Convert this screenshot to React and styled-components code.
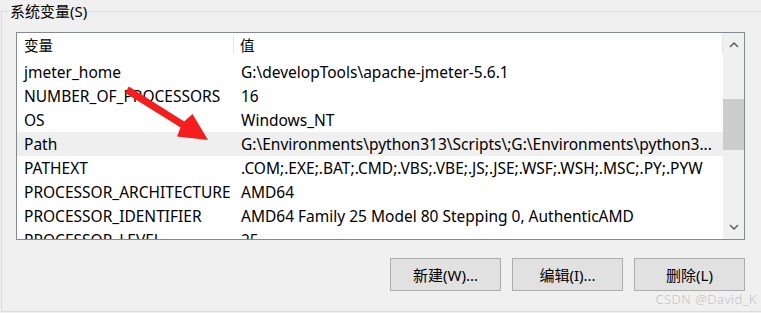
import React from "react";
import styled, { createGlobalStyle } from "styled-components";

const Global = createGlobalStyle`
  html, body { margin: 0; padding: 0; background: #f0f0f0; }
  body { font-family: "Noto Sans", "Noto Sans CJK SC", sans-serif; color: #000; }
`;

const Page = styled.div`
  position: relative;
  width: 761px;
  height: 313px;
  overflow: hidden;
  background: #f0f0f0;
  padding-top: 11px;
  box-sizing: border-box;
`;

const GroupBox = styled.div`
  margin-left: 1px;
  height: 301px;
  border: 1px solid #dcdcdc;
  border-right: none;
  box-sizing: border-box;
`;

const GroupTitle = styled.div`
  width: fit-content;
  height: 20px;
  margin: -11px 0 0 7px;
  padding: 0 1px;
  background: #f0f0f0;
  font-size: 15px;
  line-height: 20px;
`;

const ListBox = styled.div`
  display: flex;
  margin: 11px 0 0 14px;
  width: 729px;
  height: 208px;
  border: 1px solid #858a91;
  box-sizing: border-box;
  background: #fff;
  overflow: hidden;
`;

const ListArea = styled.div`
  flex: 1;
  display: flex;
  flex-direction: column;
  overflow: hidden;
`;

const HeaderRow = styled.div`
  display: flex;
  height: 27px;
  flex: none;
  align-items: stretch;
  font-size: 14.5px;
`;

const Row = styled.div`
  display: flex;
  height: 24px;
  flex: none;
  align-items: center;
  font-size: 15.5px;
  line-height: 20px;
  background: ${(p) => (p.$hot ? "#efefef" : "#fff")};
`;

const NameCell = styled.div`
  width: 217px;
  flex: none;
  padding-left: 7px;
  box-sizing: border-box;
  white-space: nowrap;
  overflow: hidden;
`;

const ValueCell = styled.div`
  flex: 1;
  padding-left: 7px;
  white-space: nowrap;
  overflow: hidden;
`;

const HeaderCell = styled.div`
  display: flex;
  align-items: center;
  box-sizing: border-box;
  padding-left: ${(p) => p.$pad}px;
  width: ${(p) => (p.$w ? `${p.$w}px` : "auto")};
  flex: ${(p) => (p.$w ? "none" : "1")};
  border-right: 1px solid #e5e5e5;
  margin: 1px 0 6px;
`;

const ScrollBar = styled.div`
  width: 21px;
  flex: none;
  display: flex;
  flex-direction: column;
  background: #f0f0f0;
`;

const ScrollButton = styled.div`
  height: 24px;
  flex: none;
  display: flex;
  align-items: center;
  justify-content: center;
`;

const Track = styled.div`
  flex: 1;
`;

const Thumb = styled.div`
  margin-top: 42px;
  height: 51px;
  background: #cdcdcd;
`;

const ButtonRow = styled.div`
  display: flex;
  justify-content: flex-end;
  gap: 11px;
  margin: 18px 16px 0 0;
`;

const Button = styled.button`
  width: 111px;
  height: 33px;
  border: 1px solid #adadad;
  background: #e1e1e1;
  font-family: "Noto Sans", "Noto Sans CJK SC", sans-serif;
  font-size: 15px;
  color: #000;
  padding: 0;
`;

const Watermark = styled.div`
  position: absolute;
  right: 4px;
  bottom: 5px;
  font-size: 13px;
  font-weight: 300;
  color: #c4c4c4;
  letter-spacing: 0.5px;
`;

const Arrow = styled.svg`
  position: absolute;
  left: 0;
  top: 0;
  pointer-events: none;
`;

const Chevron = ({ down }) => (
  <svg width="10" height="6" viewBox="0 0 10 6">
    <path
      d={down ? "M1 1 L5 5 L9 1" : "M1 5 L5 1 L9 5"}
      fill="none"
      stroke="#606060"
      strokeWidth="1.5"
    />
  </svg>
);

const rows = [
  ["jmeter_home", "G:\\developTools\\apache-jmeter-5.6.1"],
  ["NUMBER_OF_PROCESSORS", "16"],
  ["OS", "Windows_NT"],
  ["Path", "G:\\Environments\\python313\\Scripts\\;G:\\Environments\\python3...", true],
  ["PATHEXT", ".COM;.EXE;.BAT;.CMD;.VBS;.VBE;.JS;.JSE;.WSF;.WSH;.MSC;.PY;.PYW"],
  ["PROCESSOR_ARCHITECTURE", "AMD64"],
  ["PROCESSOR_IDENTIFIER", "AMD64 Family 25 Model 80 Stepping 0, AuthenticAMD"],
  ["PROCESSOR_LEVEL", "25"],
];

export default function App() {
  return (
    <Page>
      <Global />
      <GroupBox>
        <GroupTitle>系统变量(S)</GroupTitle>
        <ListBox>
          <ListArea>
            <HeaderRow>
              <HeaderCell $w={217} $pad={7}>变量</HeaderCell>
              <HeaderCell $pad={6}>值</HeaderCell>
            </HeaderRow>
            {rows.map(([n, v, hot]) => (
              <Row key={n} $hot={hot}>
                <NameCell>{n}</NameCell>
                <ValueCell>{v}</ValueCell>
              </Row>
            ))}
          </ListArea>
          <ScrollBar>
            <ScrollButton>
              <Chevron />
            </ScrollButton>
            <Track>
              <Thumb />
            </Track>
            <ScrollButton>
              <Chevron down />
            </ScrollButton>
          </ScrollBar>
        </ListBox>
        <ButtonRow>
          <Button>新建(W)...</Button>
          <Button>编辑(I)...</Button>
          <Button>删除(L)</Button>
        </ButtonRow>
      </GroupBox>
      <Arrow width="761" height="313" viewBox="0 0 761 313">
        <polygon
          points="128.8,86.5 184.2,121.4 192.5,114 208,140 177,136.5 180.6,127.4 125.2,93"
          fill="#f51d1d"
        />
      </Arrow>
      <Watermark>CSDN @David_K</Watermark>
    </Page>
  );
}
